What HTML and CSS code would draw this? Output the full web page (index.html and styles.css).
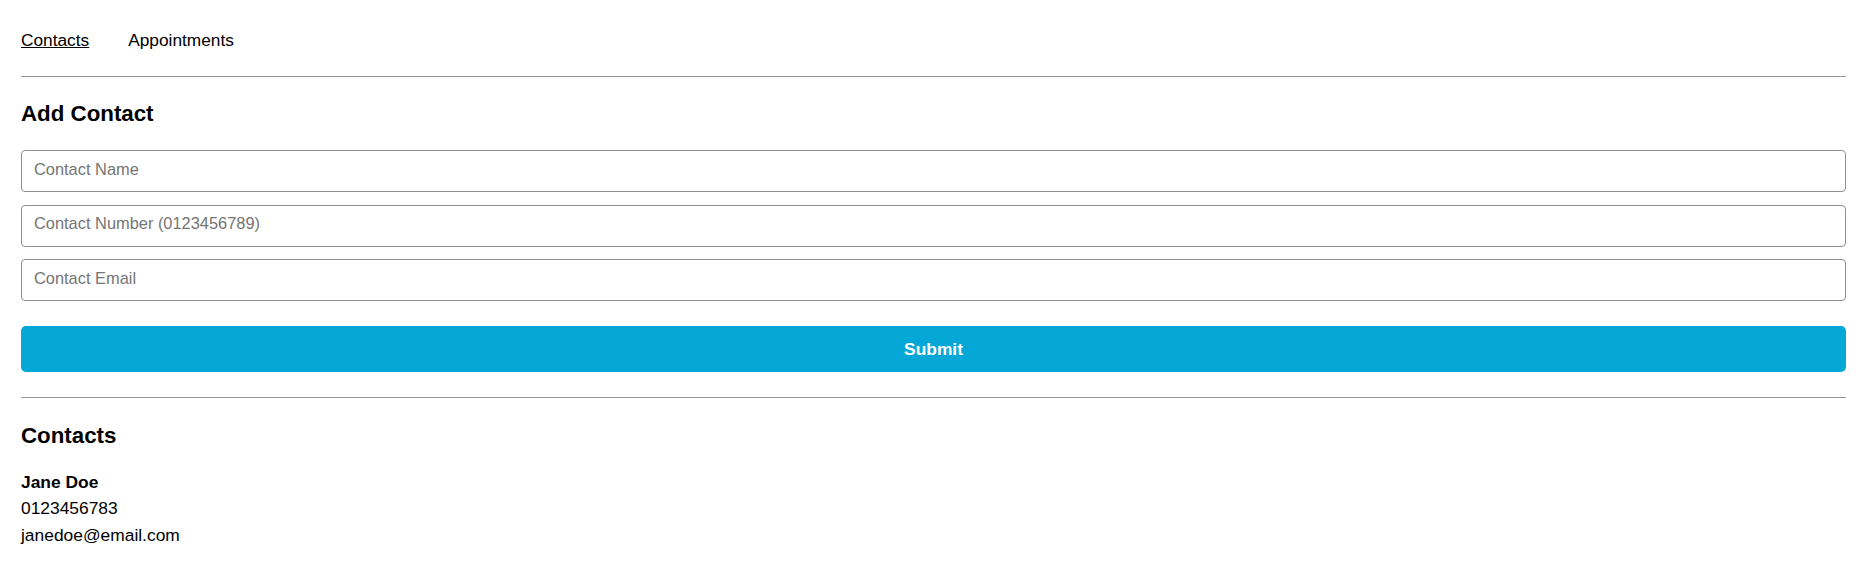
FILE: index.html
```html
<!DOCTYPE html>
<html lang="en">
<head>
<meta charset="utf-8">
<title>Contacts</title>
<link rel="stylesheet" href="styles.css">
</head>
<body>
<div class="page">
  <nav class="nav">
    <a class="nav-link active" href="#">Contacts</a>
    <a class="nav-link" href="#">Appointments</a>
  </nav>
  <hr class="rule rule-top">
  <section class="add">
    <h2 class="heading">Add Contact</h2>
    <form class="form">
      <input class="field" type="text" placeholder="Contact Name">
      <input class="field" type="text" placeholder="Contact Number (0123456789)">
      <input class="field" type="text" placeholder="Contact Email">
      <button class="submit" type="button">Submit</button>
    </form>
  </section>
  <hr class="rule rule-mid">
  <section class="list">
    <h2 class="heading">Contacts</h2>
    <div class="contact">
      <div class="contact-name">Jane Doe</div>
      <div class="contact-line">0123456783</div>
      <div class="contact-line">janedoe@email.com</div>
    </div>
  </section>
</div>
</body>
</html>
```

FILE: styles.css
```css
html, body {
  margin: 0;
  padding: 0;
  background: #ffffff;
}
body {
  font-family: "Liberation Sans", Arial, sans-serif;
  color: #000;
  font-size: 17.4px;
}
.page {
  padding: 30px 14px 0 21px;
}
.nav {
  display: flex;
  gap: 39px;
  line-height: 20px;
}
.nav-link {
  color: #000;
  text-decoration: none;
  font-size: 17.3px;
}
.nav-link.active {
  text-decoration: underline;
}
.rule {
  border: none;
  border-top: 1px solid #969696;
  margin: 0;
  height: 0;
}
.rule-top {
  margin-top: 26px;
}
.heading {
  font-size: 22.3px;
  font-weight: bold;
  line-height: 26px;
  margin: 0;
}
.add .heading {
  margin-top: 24px;
}
.form {
  display: flex;
  flex-direction: column;
  margin-top: 23px;
}
.field {
  box-sizing: border-box;
  height: 42px;
  margin: 0 0 12.5px 0;
  padding: 0 12px 4px 12px;
  border: 1px solid #8f8f8f;
  border-radius: 4px;
  font-family: "Liberation Sans", Arial, sans-serif;
  font-size: 16.4px;
  color: #000;
  background: #fff;
  outline: none;
}
.field::placeholder {
  color: #757575;
}
.submit {
  margin-top: 12.5px;
  height: 46px;
  border: none;
  border-radius: 5px;
  background: #05a7d7;
  color: #fff;
  font-family: "Liberation Sans", Arial, sans-serif;
  font-size: 17.4px;
  font-weight: bold;
  cursor: pointer;
}
.rule-mid {
  margin-top: 25px;
}
.list .heading {
  margin-top: 24.5px;
}
.contact {
  margin-top: 20.5px;
  line-height: 26.3px;
}
.contact-name {
  font-weight: bold;
}
```
